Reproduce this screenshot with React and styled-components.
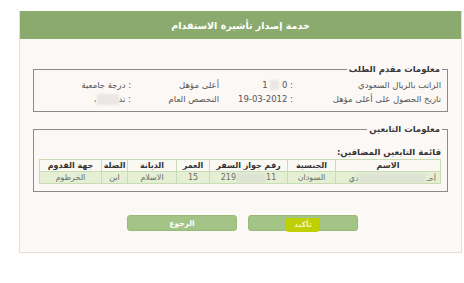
import React from "react";
import styled, { createGlobalStyle } from "styled-components";

const GlobalStyle = createGlobalStyle`
  body {
    margin: 0;
    background: #ffffff;
    font-family: "DejaVu Sans", "Noto Sans", sans-serif;
  }
`;

const Page = styled.div`
  width: 464px;
  height: 283px;
  padding: 11px 2px 0 19px;
  box-sizing: border-box;
`;

const Panel = styled.div`
  direction: rtl;
  width: 443px;
  height: 242px;
  box-sizing: border-box;
  background: #fcf8f6;
  border: 1px solid #e3dfdc;
  border-top: none;
  display: flex;
  flex-direction: column;
`;

const Header = styled.div`
  height: 28px;
  background: #8aab6d;
  color: #ffffff;
  font-size: 9.5px;
  font-weight: bold;
  display: flex;
  align-items: center;
  justify-content: center;
`;

const Body = styled.div`
  padding: 24px 13px 0 13px;
  display: flex;
  flex-direction: column;
  gap: 11px;
`;

const Box = styled.fieldset`
  margin: 0;
  border: 1px solid #8d8a88;
  padding: ${(p) => p.$pad};
  min-width: 0;
`;

const Legend = styled.legend`
  font-size: 8.5px;
  font-weight: bold;
  color: #3a3a3a;
  padding: 0 2px;
  margin-right: -1px;
  line-height: 12px;
`;

const InfoGrid = styled.div`
  display: grid;
  grid-template-columns: 148px 74px 88px 1fr;
  grid-auto-rows: 14px;
  align-items: center;
  font-size: 8.5px;
  color: #555;
`;

const Cell = styled.div`
  white-space: nowrap;
`;

const Blur = styled.span`
  display: inline-block;
  width: ${(p) => p.$w}px;
  height: ${(p) => p.$h || 10}px;
  vertical-align: middle;
  background: ${(p) => p.$bg || "#e9e6e4"};
  filter: blur(1px);
`;

const Ltr = styled.span`
  direction: ltr;
  unicode-bidi: isolate;
`;

const Caption = styled.div`
  font-size: 8.5px;
  font-weight: bold;
  color: #333;
  line-height: 14px;
`;

const Table = styled.table`
  width: 100%;
  border-collapse: collapse;
  table-layout: fixed;
  font-size: 8px;
`;

const Th = styled.th`
  border: 1px solid #c9dcb6;
  background: #faf8f2;
  color: #333;
  font-weight: bold;
  height: 11px;
  padding: 0;
  text-align: center;
  white-space: nowrap;
`;

const Td = styled.td`
  border: 1px solid #c9dcb6;
  background: #e5efd3;
  color: #6a6a6a;
  height: 11px;
  padding: 0 ${(p) => (p.$right ? "4px" : "0")};
  text-align: ${(p) => (p.$right ? "right" : "center")};
  white-space: nowrap;
`;

const Actions = styled.div`
  display: flex;
  justify-content: center;
  gap: 11px;
  margin-top: 12px;
  padding-left: 4px;
`;

const Button = styled.button`
  width: 110px;
  height: 16px;
  border: 1px solid #98ba7b;
  border-radius: 3px;
  background: #a3c487;
  color: #ffffff;
  font-family: inherit;
  font-size: 7.5px;
  font-weight: bold;
  padding: 0;
  display: flex;
  align-items: center;
  justify-content: center;
`;

const Marker = styled.span`
  display: inline-block;
  background: #bfcf00;
  color: #f4f6c0;
  padding: 2px 8px 3px;
  margin-top: 3px;
  border-radius: 1px 1px 4px 3px;
`;

const columns = [
  { title: "الاسم", width: 105 },
  { title: "الجنسية", width: 48 },
  { title: "رقم جواز السفر", width: 78 },
  { title: "العمر", width: 33 },
  { title: "الديانة", width: 49 },
  { title: "الصلة", width: 26 },
  { title: "جهة القدوم", width: 62 },
];

export default function App() {
  return (
    <>
      <GlobalStyle />
      <Page>
        <Panel>
          <Header>خدمة إصدار تأشيرة الاستقدام</Header>
          <Body>
            <Box $pad="3px 6px 5px">
              <Legend>معلومات مقدم الطلب</Legend>
              <InfoGrid>
                <Cell>الراتب بالريال السعودي</Cell>
                <Cell>
                  : 0 <Blur $w={9} /> 1
                </Cell>
                <Cell>أعلى مؤهل</Cell>
                <Cell>: درجة جامعية</Cell>
                <Cell>تاريخ الحصول على أعلى مؤهل</Cell>
                <Cell>: 19-03-2012</Cell>
                <Cell>التخصص العام</Cell>
                <Cell>
                  : تد<Blur $w={22} $h={11} />،
                </Cell>
              </InfoGrid>
            </Box>
            <Box $pad="10px 6px 7px">
              <Legend>معلومات التابعين</Legend>
              <Caption>قائمة التابعين المضافين:</Caption>
              <Table>
                <colgroup>
                  {columns.map((c) => (
                    <col key={c.title} style={{ width: c.width }} />
                  ))}
                </colgroup>
                <thead>
                  <tr>
                    {columns.map((c) => (
                      <Th key={c.title}>{c.title}</Th>
                    ))}
                  </tr>
                </thead>
                <tbody>
                  <tr>
                    <Td $right>
                      أحـ
                      <Blur $w={68} $bg="#dde4d3" />
                      دي
                    </Td>
                    <Td>السودان</Td>
                    <Td>
                      <Ltr>
                        219
                        <Blur $w={30} $bg="#dde4d3" />
                        11
                      </Ltr>
                    </Td>
                    <Td>15</Td>
                    <Td>الاسلام</Td>
                    <Td>ابن</Td>
                    <Td>الخرطوم</Td>
                  </tr>
                </tbody>
              </Table>
            </Box>
            <Actions>
              <Button>
                <Marker>تأكيد</Marker>
              </Button>
              <Button>الرجوع</Button>
            </Actions>
          </Body>
        </Panel>
      </Page>
    </>
  );
}
